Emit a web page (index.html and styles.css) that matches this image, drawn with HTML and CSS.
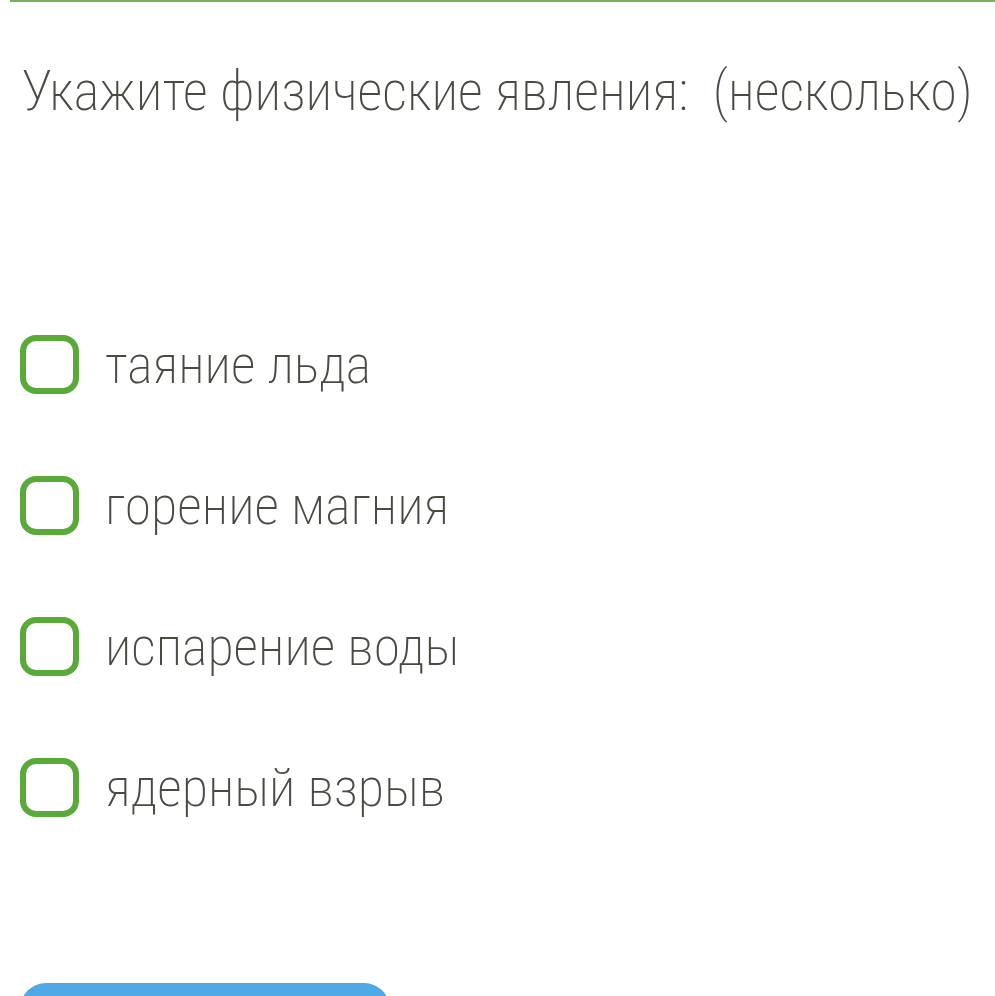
FILE: index.html
```html
<!DOCTYPE html>
<html lang="ru">
<head>
    <meta charset="UTF-8">
    <title>Тест</title>
    <link rel="stylesheet" href="styles.css">
</head>
<body>
    <div class="topline"></div>
    <div class="question">
        <h1 class="title">Укажите физические явления:&nbsp; (несколько)</h1>
        <ul class="answers">
            <li class="answer"><span class="box"></span><span class="label">таяние льда</span></li>
            <li class="answer"><span class="box"></span><span class="label">горение магния</span></li>
            <li class="answer"><span class="box"></span><span class="label">испарение воды</span></li>
            <li class="answer"><span class="box"></span><span class="label">ядерный взрыв</span></li>
        </ul>
        <button class="submit"></button>
    </div>
</body>
</html>
```

FILE: styles.css
```css
body {
    margin: 0;
    padding: 0;
    background: #fff;
    font-family: Roboto, "Liberation Sans", sans-serif;
    font-stretch: condensed;
    font-weight: 200;
    color: #4a4a42;
    overflow: hidden;
}

.topline {
    height: 2px;
    margin-left: 10px;
    background: #7cae5c;
}

.question {
    padding: 0 20px;
}

.title {
    margin: 54px 0 0 2px;
    font-size: 54.6px;
    font-weight: 200;
    line-height: 70px;
    white-space: nowrap;
}

.answers {
    list-style: none;
    margin: 209px 0 0;
    padding: 0;
    display: flex;
    flex-direction: column;
    gap: 82px;
}

.answer {
    display: flex;
    align-items: center;
    gap: 26px;
    height: 59px;
}

.box {
    width: 47px;
    height: 47px;
    border: 6px solid #5aaa3a;
    border-radius: 16px;
    flex: none;
}

.label {
    font-size: 54px;
    line-height: 59px;
}

.submit {
    display: block;
    margin-top: 166px;
    width: 370px;
    height: 60px;
    border: none;
    border-radius: 26px;
    background: #4ea9e6;
}
```
